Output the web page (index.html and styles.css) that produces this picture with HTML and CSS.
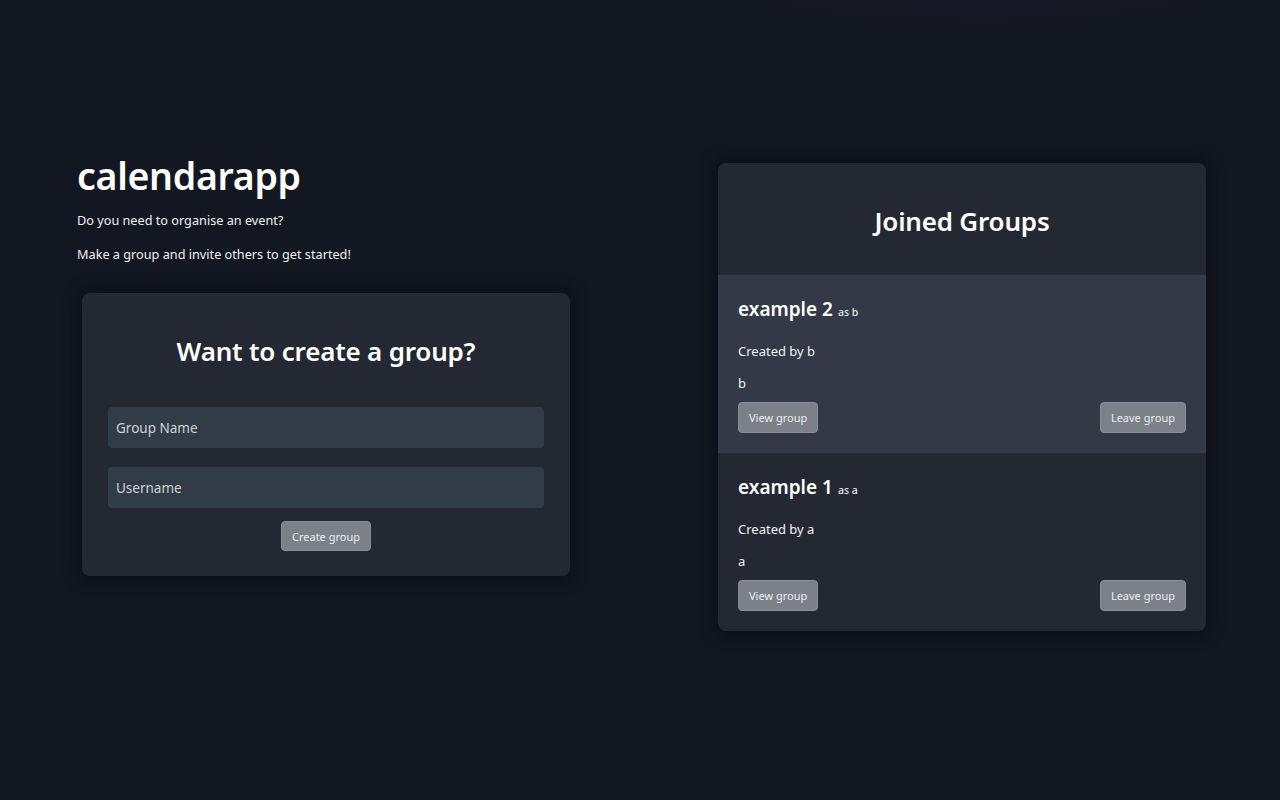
FILE: index.html
```html
<!DOCTYPE html>
<html>
<head>
<meta charset="utf-8">
<link rel="stylesheet" href="styles.css">
</head>
<body>
<div class="glow"></div>
<main class="page">
  <section class="left">
    <h1 class="brand">calendarapp</h1>
    <p class="intro">Do you need to organise an event?</p>
    <p class="intro">Make a group and invite others to get started!</p>
    <div class="card create">
      <h2 class="card-title">Want to create a group?</h2>
      <input class="field" type="text" placeholder="Group Name">
      <input class="field" type="text" placeholder="Username">
      <div class="center"><button class="btn">Create group</button></div>
    </div>
  </section>
  <section class="right">
    <div class="card groups">
      <div class="groups-head"><h2 class="card-title">Joined Groups</h2></div>
      <div class="group active">
        <h3 class="group-name">example 2 <span class="as">as b</span></h3>
        <p class="meta">Created by b</p>
        <p class="meta">b</p>
        <div class="actions"><button class="btn">View group</button><button class="btn">Leave group</button></div>
      </div>
      <div class="group">
        <h3 class="group-name">example 1 <span class="as">as a</span></h3>
        <p class="meta">Created by a</p>
        <p class="meta">a</p>
        <div class="actions"><button class="btn">View group</button><button class="btn">Leave group</button></div>
      </div>
    </div>
  </section>
</main>
</body>
</html>
```

FILE: styles.css
```css
* { box-sizing: border-box; }
html, body { margin: 0; height: 100%; }
body {
  background: #131721;
  color: #f3f4f6;
  font-family: "Noto Sans", "Open Sans", sans-serif;
  position: relative;
  overflow: hidden;
}
.glow {
  position: absolute;
  top: -60px;
  left: 700px;
  width: 560px;
  height: 90px;
  background: radial-gradient(ellipse at center, rgba(40, 20, 50, 0.35), rgba(40, 20, 50, 0) 70%);
  pointer-events: none;
}
.page {
  display: flex;
  align-items: flex-start;
  padding: 0 0 0 77px;
  gap: 148px;
  position: relative;
}
.left { width: 493px; padding-top: 151px; }
.right { width: 488px; padding-top: 163px; }
.brand {
  margin: 0;
  font-size: 37.5px;
  font-weight: 600;
  line-height: 50px;
  letter-spacing: -0.3px;
  color: #fff;
}
.intro {
  margin: 0;
  font-size: 12.7px;
  line-height: 34px;
  color: #eef0f3;
}
.intro:first-of-type { margin-top: 2px; }
.card {
  background: #242832;
  border-radius: 8px;
  box-shadow: 0 0 14px 4px rgba(8, 10, 16, 0.55);
}
.create {
  margin: 22px 0 0 5px;
  width: 488px;
  height: 283px;
  padding: 40px 26px 0 26px;
}
.card-title {
  margin: 0;
  text-align: center;
  font-size: 26px;
  font-weight: 600;
  line-height: 36px;
  letter-spacing: -0.2px;
  color: #fff;
}
.field {
  display: block;
  width: 100%;
  height: 41px;
  border: none;
  border-radius: 4px;
  background: #323b48;
  padding: 0 8px;
  font-family: inherit;
  font-size: 13.5px;
  color: #e5e7eb;
  outline: none;
}
.field::placeholder { color: #cfd2d7; }
.create .card-title { margin-bottom: 38px; }
.create .field + .field { margin-top: 19px; }
.center { display: flex; justify-content: center; margin-top: 13px; }
.btn {
  background: #7b8089;
  color: #eceef1;
  border: 1px solid #8a8f97;
  border-radius: 4px;
  font-family: inherit;
  font-size: 11px;
  height: 30px;
  padding: 0 10px;
}
.groups { overflow: hidden; }
.groups-head { height: 112px; display: flex; align-items: center; justify-content: center; padding-top: 4px; }
.group { height: 178px; padding: 19px 20px 0 20px; }
.group.active { background: #333947; }
.group-name {
  margin: 0;
  font-size: 19px;
  font-weight: 600;
  line-height: 30px;
  color: #fff;
}
.as { font-size: 10.5px; font-weight: 500; margin-left: 0; color: #e5e7eb; }
.meta { margin: 0; font-size: 13px; line-height: 32px; color: #f1f3f5; }
.group .meta:first-of-type { margin-top: 8px; }
.actions { display: flex; justify-content: space-between; align-items: center; margin-top: 3px; }
.actions .btn { height: 31px; }
```
